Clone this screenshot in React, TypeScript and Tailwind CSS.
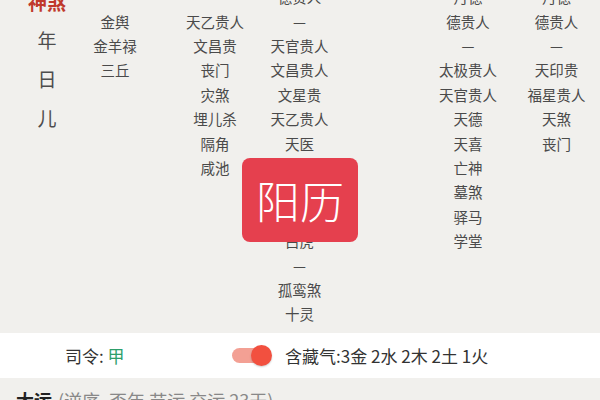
const font = { fontFamily: '"Noto Sans CJK SC", "Noto Sans", sans-serif' };

// each column lists rows of 24.4px; null keeps the row empty (rows under the badge too)
const columns: { cls: string; items: (string | null)[] }[] = [
	{ cls: "pr-[29px]", items: [null, "金舆", "金羊禄", "三丘"] },
	{ cls: "pl-[8px]", items: [null, "天乙贵人", "文昌贵", "丧门", "灾煞", "埋儿杀", "隔角", "咸池"] },
	{
		cls: "",
		items: ["德贵人", "—", "天官贵人", "文昌贵人", "文星贵", "天乙贵人", "天医", null, null, null, "白虎", "—", "孤鸾煞", "十灵"],
	},
	{ cls: "", items: [] },
	{
		cls: "",
		items: ["月德", "德贵人", "—", "太极贵人", "天官贵人", "天德", "天喜", "亡神", "墓煞", "驿马", "学堂"],
	},
	{ cls: "pl-[2px]", items: ["月德", "德贵人", "—", "天印贵", "福星贵人", "天煞", "丧门"] },
];

function Column({ cls, items }: { cls: string; items: (string | null)[] }) {
	return (
		<div className={`flex flex-col items-center ${cls}`}>
			{items.map((t, i) => (
				<div key={i} className="flex h-[24.4px] items-center whitespace-nowrap text-[14.5px] text-[#4a4a4a]">
					{t}
				</div>
			))}
		</div>
	);
}

export default function App() {
	return (
		<div className="h-[400px] w-[600px] overflow-hidden bg-[#f1f0ed]" style={font}>
			<div className="relative h-[333px] overflow-hidden">
				<div className="-mt-[15px] grid grid-cols-[94px_71px_92px_85px_83px_86px_89px]">
					<div className="flex flex-col items-center">
						<div className="h-[36px] pt-[4px] text-[19px] font-bold leading-[26px] text-[#c0392b]">神煞</div>
						<div className="flex h-[39px] items-center text-[19px] text-[#4d4d4d]">年</div>
						<div className="flex h-[39px] items-center text-[19px] text-[#4d4d4d]">日</div>
						<div className="flex h-[39px] items-center text-[19px] text-[#4d4d4d]">儿</div>
					</div>
					{columns.map((c, i) => (
						<Column key={i} cls={c.cls} items={c.items} />
					))}
				</div>
				<div className="absolute left-[242px] top-[158px] flex h-[84px] w-[116px] items-center justify-center rounded-[8px] bg-[#e5404e]">
					<span className="text-[44px] font-light leading-none text-white">阳历</span>
				</div>
			</div>
			<div className="flex h-[45px] items-center bg-white text-[17px] text-[#333]">
				<div className="ml-[65px] w-[167px]">
					司令: <span className="text-[#2e9e6a]">甲</span>
				</div>
				<div className="relative mr-[13px] h-[15px] w-[30px] rounded-full bg-[#f3a094]">
					<div className="absolute -right-[10px] -top-[3px] h-[21px] w-[21px] rounded-full bg-[#f2503f] shadow-[0_1px_2px_rgba(0,0,0,0.2)]" />
				</div>
				<div className="ml-[10px]">含藏气:3金 2水 2木 2土 1火</div>
			</div>
			<div className="flex items-center px-[16px] pt-[9px] text-[18px]">
				<span className="font-bold text-[#222]">大运</span>
				<span className="ml-[6px] text-[#888]">(逆序, 否年 节运 交运 23天)</span>
			</div>
		</div>
	);
}
